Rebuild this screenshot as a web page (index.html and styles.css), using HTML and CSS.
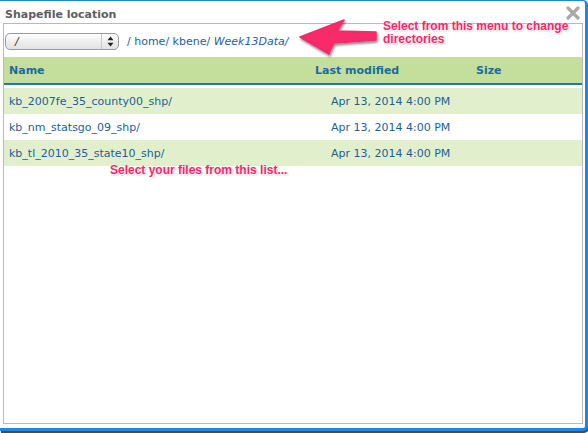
FILE: index.html
```html
<!DOCTYPE html>
<html>
<head>
<meta charset="utf-8">
<link rel="stylesheet" href="styles.css">
</head>
<body>
<div class="window">
  <div class="titlebar">
    <span class="title">Shapefile location</span>
    <svg class="close" width="14" height="14" viewBox="0 0 14 14"><path d="M2 2 L12 12 M12 2 L2 12" stroke="#a9a9a9" stroke-width="3.2" stroke-linecap="round"/></svg>
  </div>
  <div class="panel">
    <div class="toolbar">
      <div class="select">
        <span class="sel-value">/</span>
        <span class="sel-arrows"><svg width="7" height="11" viewBox="0 0 7 11"><path d="M3.5 0.5 L6.5 4.2 L0.5 4.2 Z M3.5 10.5 L6.5 6.8 L0.5 6.8 Z" fill="#222"/></svg></span>
      </div>
      <div class="crumbs">/ home/ kbene/ <em>Week13Data/</em></div>
    </div>
    <div class="table">
      <div class="row head">
        <div class="c-name">Name</div>
        <div class="c-mod">Last modified</div>
        <div class="c-size">Size</div>
      </div>
      <div class="spacer"></div>
      <div class="row alt">
        <div class="c-name">kb_2007fe_35_county00_shp/</div>
        <div class="c-mod date">Apr 13, 2014 4:00 PM</div>
        <div class="c-size"></div>
      </div>
      <div class="row">
        <div class="c-name">kb_nm_statsgo_09_shp/</div>
        <div class="c-mod date">Apr 13, 2014 4:00 PM</div>
        <div class="c-size"></div>
      </div>
      <div class="row alt">
        <div class="c-name">kb_tl_2010_35_state10_shp/</div>
        <div class="c-mod date">Apr 13, 2014 4:00 PM</div>
        <div class="c-size"></div>
      </div>
    </div>
  </div>
  <svg class="arrow" width="90" height="44" viewBox="0 0 90 44">
    <defs>
      <filter id="sh" x="-20%" y="-20%" width="140%" height="160%">
        <feDropShadow dx="1" dy="2" stdDeviation="1.2" flood-color="#000" flood-opacity="0.45"/>
      </filter>
    </defs>
    <path d="M2 20 L46 3 Q42 9 39 14 L78 15 L78 23 L36 26 Q33 31 31 37 Z" fill="#f7296b" stroke="#f7296b" stroke-width="1.5" stroke-linejoin="round" filter="url(#sh)"/>
  </svg>
  <div class="note note-menu">Select from this menu to change<br>directories</div>
  <div class="note note-list">Select your files from this list...</div>
</div>
</body>
</html>
```
FILE: styles.css
```css
html, body {
  margin: 0;
  padding: 0;
  background: #fff;
}
body {
  width: 588px;
  height: 433px;
  overflow: hidden;
  font-family: "DejaVu Sans", Verdana, sans-serif;
}
.window {
  position: relative;
  box-sizing: border-box;
  width: 588px;
  height: 431px;
  background: #fff;
  border-style: solid;
  border-color: #1f87e3;
  border-width: 1px 3px 3px 0;
  border-radius: 0 5px 5px 0;
  box-shadow: 1px 2px 0 #4a4a4a;
  display: flex;
  flex-direction: column;
}
.titlebar {
  height: 22px;
  display: flex;
  align-items: center;
  justify-content: space-between;
  padding: 0 5px 0 5px;
}
.title {
  font-weight: bold;
  font-size: 11px;
  color: #5e5e5e;
  margin-top: 4px;
}
.close {
  margin-top: 2px;
}
.panel {
  flex: 1;
  margin: 0 2px 4px 3px;
  border: 1px solid #b9b9b9;
  display: flex;
  flex-direction: column;
}
.toolbar {
  height: 33px;
  display: flex;
  align-items: center;
  padding-left: 1px;
  gap: 8px;
}
.select {
  box-sizing: border-box;
  width: 114px;
  height: 17px;
  border: 1px solid #9a9a9a;
  border-radius: 5px;
  background: linear-gradient(#ffffff, #ececec 60%, #e2e2e2);
  display: flex;
  align-items: center;
  justify-content: space-between;
  margin-top: 1px;
}
.sel-value {
  font-family: "DejaVu Sans", sans-serif;
  font-style: italic;
  font-size: 11px;
  color: #333;
  padding-left: 9px;
}
.sel-arrows {
  width: 16px;
  height: 15px;
  border-left: 1px solid #c8c8c8;
  display: flex;
  align-items: center;
  justify-content: center;
}
.crumbs {
  font-size: 11px;
  color: #1f5f99;
  margin-top: 1px;
}
.crumbs em {
  font-style: italic;
}
.table {
  display: flex;
  flex-direction: column;
}
.row {
  display: grid;
  grid-template-columns: 311px 161px 1fr;
  height: 26px;
  align-items: center;
  font-size: 11px;
  color: #1d5f93;
}
.row.head {
  height: 26px;
  background: #c4df9b;
  border-bottom: 2px solid #2476ad;
  font-weight: bold;
  color: #1f6a9c;
}
.spacer {
  height: 3px;
}
.row.alt {
  background: #e2efcc;
}
.c-name {
  padding-left: 5px;
}
.date {
  padding-left: 16px;
}
.arrow {
  position: absolute;
  left: 298px;
  top: 16px;
}
.note {
  position: absolute;
  font-family: "Liberation Sans", Arial, sans-serif;
  font-weight: bold;
  color: #f5266a;
  text-shadow: 0 0 1px #fff, 0 0 2px #fff, 1px 1px 1px #fff, 1px 1px 2px rgba(0,0,0,0.45);
}
.note-menu {
  left: 383px;
  top: 19px;
  font-size: 12px;
  line-height: 13px;
}
.note-list {
  left: 110px;
  top: 162px;
  font-size: 12px;
  line-height: 14px;
}
```
